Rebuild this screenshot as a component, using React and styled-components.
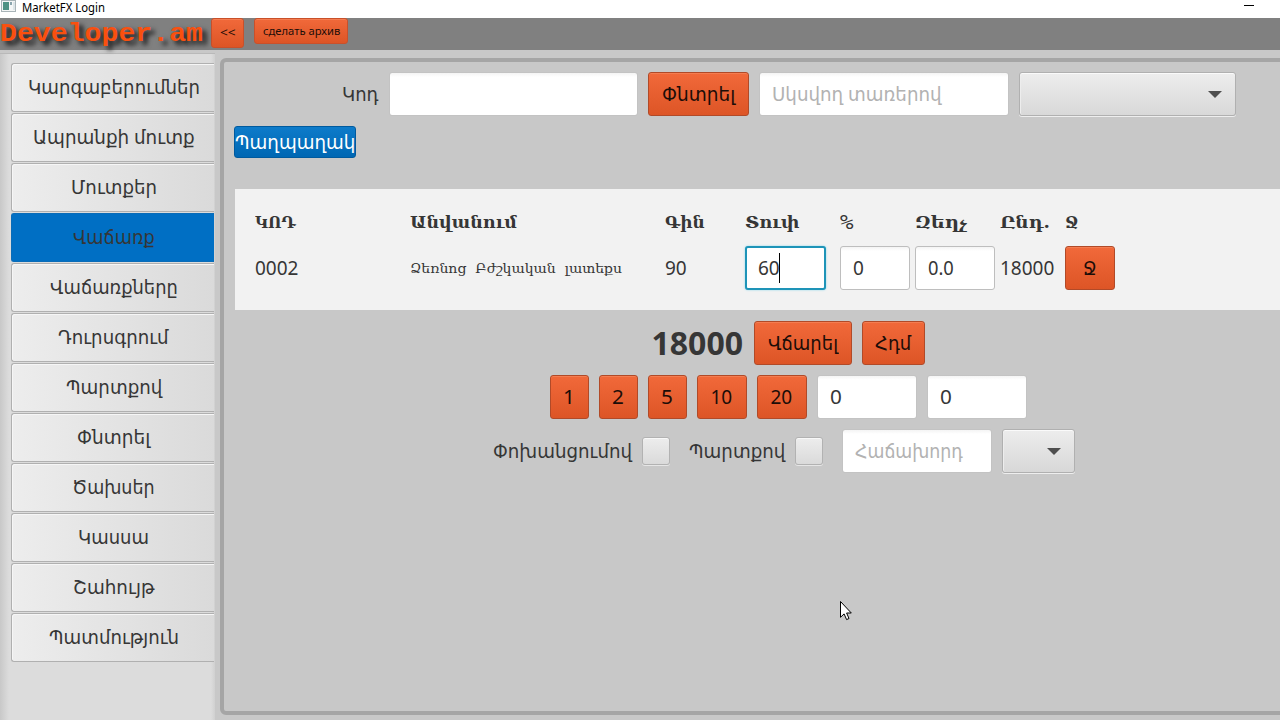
import { useLayoutEffect, useRef, useState } from "react";
import styled, { createGlobalStyle, css } from "styled-components";

const GlobalStyle = createGlobalStyle`
  * {
    box-sizing: border-box;
  }
  body {
    margin: 0;
    background: #c8c8c8;
    font-family: "Noto Sans", "DejaVu Sans", sans-serif;
    color: #363636;
    overflow: hidden;
  }
`;

const sans = `"Noto Sans", "DejaVu Sans", sans-serif`;
const slab = `"DejaVu Serif", serif`;

const Window = styled.div`
  position: relative;
  width: 1280px;
  height: 720px;
  overflow: hidden;
  display: flex;
  flex-direction: column;
  background: #c8c8c8;
`;

const TitleBar = styled.div`
  height: 18px;
  flex: none;
  display: flex;
  align-items: flex-start;
  justify-content: space-between;
  background: #fff;
  color: #000;
`;

const TitleLeft = styled.div`
  display: flex;
  align-items: flex-start;
  gap: 6px;
  padding-left: 1px;
`;

const Minimize = styled.div`
  width: 10px;
  height: 1px;
  margin: 5px 26px 0 0;
  background: #000;
`;

const Header = styled.div`
  height: 32px;
  flex: none;
  display: flex;
  align-items: flex-start;
  background: #808080;
`;

const Brand = styled.div`
  width: 211px;
  height: 32px;
  padding-top: 2px;
  display: flex;
  align-items: flex-start;
  color: #f9500f;
  text-shadow: 4px 4px 4px rgba(0, 0, 0, 0.6), 3px 3px 6px rgba(0, 0, 0, 0.4);
`;

const Body = styled.div`
  flex: 1;
  display: flex;
  align-items: flex-start;
`;

const Sidebar = styled.div`
  width: 215px;
  height: 667px;
  margin-top: 3px;
  padding: 9px 1px 0 11px;
  flex: none;
  border-top: 1px solid #b9b9b9;
  background: linear-gradient(to right, #c8c8c8, #dcdcdc 9px, #dcdcdc 211px, #d0d0d0);
`;

const MenuItem = styled.div`
  height: 49px;
  margin-bottom: 1px;
  padding-left: 1px;
  display: flex;
  align-items: center;
  justify-content: center;
  border: 1px solid #b0b0b0;
  border-right: none;
  border-radius: 3px 0 0 3px;
  background: linear-gradient(to right, #ededed, #dadada);
  box-shadow: inset 1px 1px 0 #f6f6f6;
  ${(props) =>
    props.$active &&
    css`
      border-color: #0a6cb8;
      background: #006fc4;
      box-shadow: none;
    `}
`;

const Panel = styled.div`
  width: 1138px;
  height: 657px;
  margin: 8px 0 0 5px;
  padding: 10px 0 0 10px;
  flex: none;
  border: 4px solid #a5a5a5;
  border-radius: 6px;
`;

const Row = styled.div`
  width: 1108px;
  height: 44px;
  margin-bottom: 10px;
  display: flex;
  align-items: center;
  justify-content: ${(props) => (props.$center ? "center" : "flex-start")};
  gap: 10px;
  padding-left: ${(props) => props.$indent || 0}px;
`;

const Button = styled.div`
  width: ${(props) => props.$w}px;
  height: ${(props) => props.$h || 44}px;
  flex: none;
  display: flex;
  align-items: center;
  justify-content: center;
  border: 1px solid #b14a28;
  border-radius: 3px;
  background: linear-gradient(to bottom, #f1693a, #dd5526);
  box-shadow: inset 0 1px 0 #f47d51;
  color: #1c0d08;
`;

const HeaderButton = styled(Button)`
  margin-right: 10px;
  border-color: #c9502a;
`;

const Tag = styled.div`
  width: 122px;
  height: 32px;
  display: flex;
  align-items: center;
  justify-content: center;
  border: 1px solid #005a9e;
  border-radius: 3px;
  background: linear-gradient(to bottom, #0d7bca, #0067b3);
  color: #fff;
`;

const Field = styled.div`
  width: ${(props) => props.$w}px;
  height: 44px;
  flex: none;
  display: flex;
  align-items: center;
  padding-left: 12px;
  border: 1px solid ${(props) => (props.$outlined ? "#bebebe" : "#c3c3c3")};
  border-radius: 3px;
  background: linear-gradient(to bottom, #f4f4f4, #fff 4px);
  color: ${(props) => (props.$hint ? "#b2b2b2" : "#363636")};
  ${(props) =>
    props.$focused &&
    css`
      border: 2px solid #1e94b8;
      padding-left: 11px;
      background: #fff;
      box-shadow: 0 0 2px #7fd3ec;
    `}
`;

const Caret = styled.span`
  width: 1px;
  height: 30px;
  margin-left: -1px;
  background: #000;
`;

const Select = styled.div`
  width: ${(props) => props.$w}px;
  height: 44px;
  flex: none;
  display: flex;
  align-items: center;
  justify-content: flex-end;
  padding-right: 13px;
  border: 1px solid #b0b0b0;
  border-radius: 3px;
  background: linear-gradient(to bottom, #ededed, #d8d8d8);
  box-shadow: inset 0 1px 0 #fafafa, inset 1px 0 0 #ededed, 0 1px 0 #eee;
`;

const Checkbox = styled.div`
  width: 28px;
  height: 28px;
  flex: none;
  margin-right: ${(props) => props.$mr || 0}px;
  border: 1px solid #b2b2b2;
  border-radius: 3px;
  background: linear-gradient(to bottom, #ededed, #dadada);
  box-shadow: inset 0 1px 0 #f8f8f8, 0 1px 0 #e6e6e6;
`;

const Table = styled.div`
  width: 1110px;
  height: 121px;
  margin: 31px 0 11px 1px;
  padding: 19px 0 0 20px;
  display: grid;
  grid-template-columns: 155px 255px 80px 95px 75px 85px 65px 50px;
  grid-template-rows: 28px 44px;
  row-gap: 10px;
  align-items: center;
  background: #f2f2f2;
`;

const FitBox = styled.span`
  width: ${(props) => props.$w}px;
  flex: none;
  display: inline-flex;
  justify-content: flex-start;
`;

const FitText = styled.span`
  flex: none;
  white-space: pre;
  transform-origin: 0 50%;
  font-family: ${(props) => props.$font};
  font-size: ${(props) => props.$size}px;
  font-weight: ${(props) => props.$weight};
  line-height: ${(props) => props.$line};
`;

const Cursor = styled.svg`
  position: absolute;
  left: 840px;
  top: 601px;
`;

// stretches the text to the given width, whatever font draws it
const Text = ({ w, size = 19, font = sans, weight = 400, line = 1.3, children }) => {
  const ref = useRef();
  const [scale, setScale] = useState(1);

  useLayoutEffect(() => {
    setScale(w / ref.current.offsetWidth);
  }, [w]);

  return (
    <FitBox $w={w}>
      <FitText
        ref={ref}
        $size={size}
        $font={font}
        $weight={weight}
        $line={line}
        style={{ transform: `scaleX(${scale})` }}
      >
        {children}
      </FitText>
    </FitBox>
  );
};

const Arrow = () => (
  <svg width="14" height="7" viewBox="0 0 14 7">
    <path d="M0 0H14L7 7Z" fill="#4e4e4e" />
  </svg>
);

const menu = [
  { name: "Կարգաբերումներ", w: 172 },
  { name: "Ապրանքի մուտք", w: 162 },
  { name: "Մուտքեր", w: 86 },
  { name: "Վաճառք", w: 82, active: true },
  { name: "Վաճառքները", w: 128 },
  { name: "Դուրսգրում", w: 111 },
  { name: "Պարտքով", w: 96 },
  { name: "Փնտրել", w: 73 },
  { name: "Ծախսեր", w: 83 },
  { name: "Կասսա", w: 71 },
  { name: "Շահույթ", w: 81 },
  { name: "Պատմություն", w: 130 },
];

const columns = [
  { name: "ԿՈԴ", w: 41 },
  { name: "Անվանում", w: 107 },
  { name: "Գին", w: 40 },
  { name: "Տուփ", w: 54 },
  { name: "%", w: 13, weight: 400, font: `"DejaVu Sans Mono", monospace`, size: 19 },
  { name: "Զեղչ", w: 52 },
  { name: "Ընդ.", w: 50 },
  { name: "Ջ", w: 13 },
];

const quick = [
  { name: "1", w: 39, tw: 12 },
  { name: "2", w: 39, tw: 12 },
  { name: "5", w: 39, tw: 12 },
  { name: "10", w: 50, tw: 22 },
  { name: "20", w: 50, tw: 22 },
];

export default function App() {
  return (
    <>
      <GlobalStyle />
      <Window>
        <TitleBar>
          <TitleLeft>
            <svg width="15" height="12" viewBox="0 0 15 12">
              <rect x="0.5" y="0.5" width="14" height="11" fill="#f4f6f6" stroke="#a9b4b8" />
              <rect x="2" y="2" width="6" height="8" fill="#4f9284" />
              <rect x="9" y="2" width="2" height="3" fill="#8ba5ae" />
              <rect x="12" y="2" width="2" height="8" fill="#dde5e8" />
            </svg>
            <Text w={83} size={12} line="15px">
              MarketFX Login
            </Text>
          </TitleLeft>
          <Minimize />
        </TitleBar>
        <Header>
          <Brand>
            <Text
              w={203}
              size={25}
              font={`"Liberation Mono", monospace`}
              weight={700}
              line="30px"
            >
              Developer.am
            </Text>
          </Brand>
          <HeaderButton $w={33} $h={30}>
            <Text w={16} size={12} line="20px">
              {"<<"}
            </Text>
          </HeaderButton>
          <HeaderButton $w={94} $h={26}>
            <Text w={77} size={11.5}>
              сделать архив
            </Text>
          </HeaderButton>
        </Header>
        <Body>
          <Sidebar>
            {menu.map((item) => (
              <MenuItem key={item.name} $active={item.active}>
                <Text w={item.w}>{item.name}</Text>
              </MenuItem>
            ))}
          </Sidebar>
          <Panel>
            <Row $indent={108}>
              <Text w={37}>Կոդ</Text>
              <Field $w={249} />
              <Button $w={101}>
                <Text w={73}>Փնտրել</Text>
              </Button>
              <Field $w={250} $hint>
                <Text w={170}>Սկսվող տառերով</Text>
              </Field>
              <Select $w={217}>
                <Arrow />
              </Select>
            </Row>
            <Tag>
              <Text w={120}>Պաղպաղակ</Text>
            </Tag>
            <Table>
              {columns.map((col) => (
                <Text
                  key={col.name}
                  w={col.w}
                  size={col.size || 17}
                  font={col.font || slab}
                  weight={col.weight || 700}
                  line="30px"
                >
                  {col.name}
                </Text>
              ))}
              <Text w={43}>0002</Text>
              <Text w={212} size={13.5} font={slab} line="20px">
                {"Ձեռնոց  Բժշկական  լատեքս"}
              </Text>
              <Text w={22}>90</Text>
              <Field $w={81} $focused>
                <Text w={22}>60</Text>
                <Caret />
              </Field>
              <Field $w={70} $outlined>
                <Text w={11}>0</Text>
              </Field>
              <Field $w={80} $outlined>
                <Text w={26}>0.0</Text>
              </Field>
              <Text w={54}>18000</Text>
              <Button $w={50}>
                <Text w={14}>Ջ</Text>
              </Button>
            </Table>
            <Row $center>
              <Text w={92} size={32} weight={700}>
                18000
              </Text>
              <Button $w={98}>
                <Text w={70}>Վճարել</Text>
              </Button>
              <Button $w={63}>
                <Text w={36}>Հդմ</Text>
              </Button>
            </Row>
            <Row $center>
              {quick.map((q) => (
                <Button key={q.name} $w={q.w}>
                  <Text w={q.tw}>{q.name}</Text>
                </Button>
              ))}
              <Field $w={100}>
                <Text w={12}>0</Text>
              </Field>
              <Field $w={100}>
                <Text w={12}>0</Text>
              </Field>
            </Row>
            <Row $indent={259}>
              <Text w={139}>Փոխանցումով</Text>
              <Checkbox $mr={9} />
              <Text w={96}>Պարտքով</Text>
              <Checkbox $mr={9} />
              <Field $w={150} $hint>
                <Text w={108}>Հաճախորդ</Text>
              </Field>
              <Select $w={73}>
                <Arrow />
              </Select>
            </Row>
          </Panel>
        </Body>
        <Cursor width="12" height="20" viewBox="0 0 12 20">
          <path
            d="M0.5 0.5V16.3L4.1 12.9L6.6 18.6L9 17.5L6.6 12H11.3Z"
            fill="#fff"
            stroke="#000"
          />
        </Cursor>
      </Window>
    </>
  );
}
